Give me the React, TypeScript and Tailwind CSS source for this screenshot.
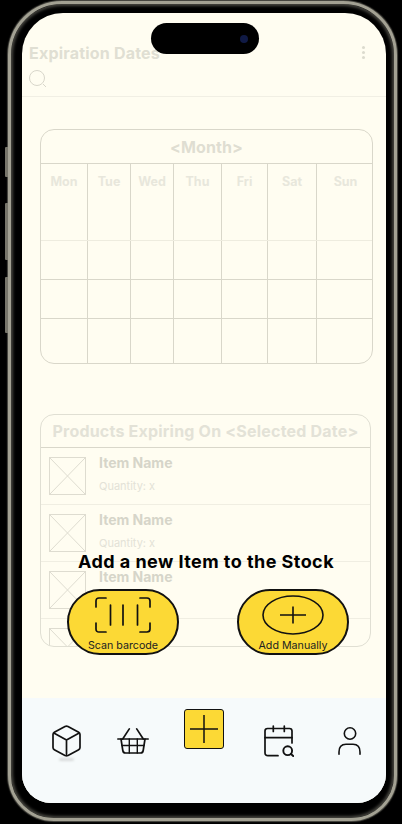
const font = "font-['Inter','Liberation_Sans',sans-serif]";

const cols = ["Mon", "Tue", "Wed", "Thu", "Fri", "Sat", "Sun"];

function CalendarCard() {
  const rows = ["h-[77px] border-[#eeecdf]", "h-[39px] border-[#d9d7ca]", "h-[39px] border-[#d9d7ca]", "h-[44px] border-[#d9d7ca]"];
  return (
    <div className="mx-[18px] mt-[32px] h-[235px] w-[333px] overflow-hidden rounded-[14px] border border-[#d9d7ca]">
      <div className="flex h-[34px] items-center justify-center border-b border-[#d9d7ca] text-[16px] font-bold tracking-[0.1px] text-[#dfded2]">&lt;Month&gt;</div>
      <div className="flex flex-col">
        {rows.map((r, i) => (
          <div key={i} className={`grid grid-cols-[47px_43px_43px_48px_46px_49px_57px] ${r} ${i < 3 ? "border-b" : ""}`}>
            {cols.map((c) => (
              <div key={c} className="border-r border-[#d9d7ca] pt-[9px] text-center text-[12.5px] font-bold text-[#e8e7dc] last:border-r-0">
                {i === 0 ? c : ""}
              </div>
            ))}
          </div>
        ))}
      </div>
    </div>
  );
}

function Thumb() {
  return (
    <svg width="37" height="38" viewBox="0 0 37 38" className="shrink-0" fill="none" stroke="#dedcd0" strokeWidth="1">
      <rect x="0.5" y="0.5" width="36" height="37" />
      <path d="M0.5 0.5 36.5 37.5M36.5 0.5 0.5 37.5" />
    </svg>
  );
}

function ProductRow({ empty }: { empty?: boolean }) {
  return (
    <div className="flex h-[57px] shrink-0 gap-[13px] border-b border-[#f0eee2] pl-[8px] pt-[9px]">
      <Thumb />
      {!empty && (
        <div className="-mt-[1px] flex flex-col">
          <div className="text-[14px] leading-[14px] font-bold text-[#d6d5c9]">Item Name</div>
          <div className="mt-[9px] text-[11px] leading-[14px] text-[#e3e2d7]">Quantity: x</div>
        </div>
      )}
    </div>
  );
}

function ProductsCard() {
  return (
    <div className="mx-[18px] mt-[50px] flex h-[233px] w-[331px] flex-col overflow-hidden rounded-[14px] border border-[#e0dfd3]">
      <div className="flex h-[33px] shrink-0 items-center justify-center border-b border-[#d9d7ca] text-[16px] font-bold tracking-[0.2px] whitespace-nowrap text-[#e3e2d7]">
        Products Expiring On &lt;Selected Date&gt;
      </div>
      <ProductRow />
      <ProductRow />
      <ProductRow />
      <ProductRow empty />
    </div>
  );
}

function ScanIcon() {
  return (
    <svg width="56" height="36" viewBox="0 0 56 36" fill="none" stroke="#111" strokeWidth="1.7" strokeLinecap="round">
      <path d="M11 1H4Q1 1 1 4V10M45 1H52Q55 1 55 4V10M11 35H4Q1 35 1 32V26M45 35H52Q55 35 55 32V26" />
      <path d="M15.5 8V28M28 8V28M42.5 8V28" />
    </svg>
  );
}

function AddIcon() {
  return (
    <svg width="62" height="40" viewBox="0 0 62 40" fill="none" stroke="#111" strokeWidth="1.6">
      <ellipse cx="31" cy="20" rx="30" ry="19" />
      <path d="M18 20H44M31 11.5V28.5" />
    </svg>
  );
}

function Action({ label, icon }: { label: string; icon: React.ReactNode }) {
  return (
    <div className="flex h-[66px] w-[112px] flex-col items-center rounded-[33px] border-2 border-[#111] bg-[#fcd935] pt-[4px]">
      <div className="flex h-[40px] items-center">{icon}</div>
      <div className="mt-[5px] text-[10.7px] leading-[12px] whitespace-nowrap text-[#222]">{label}</div>
    </div>
  );
}

function Nav() {
  return (
    <div className="flex h-[105px] shrink-0 items-start bg-[#f6fafb] pl-[30px]">
      <div className="relative mt-[27px]">
        <svg width="29" height="32" viewBox="0 0 29 32" fill="none" stroke="#111" strokeWidth="1.7" strokeLinejoin="round" className="block">
          <path d="M13 1.5Q14.5 0.8 16 1.5L26.7 7.3Q28 8 28 9.5V22.5Q28 24 26.7 24.7L16 30.5Q14.5 31.2 13 30.5L2.3 24.7Q1 24 1 22.5V9.5Q1 8 2.3 7.3Z" />
          <path d="M1.8 8 14.5 15 27.2 8M14.5 15V31" />
        </svg>
        <div className="absolute top-[33px] left-[7px] h-[3px] w-[15px] rounded-full bg-[#d9dcdc] blur-[1px]" />
      </div>
      <svg width="32" height="26" viewBox="0 0 32 26" fill="none" stroke="#111" strokeWidth="1.7" strokeLinecap="round" strokeLinejoin="round" className="ml-[36px] mt-[30px]">
        <path d="M0.8 11H31.2" />
        <path d="M4 11 5.8 22.5Q6.2 25 8.5 25H23.5Q25.8 25 26.2 22.5L28 11" />
        <path d="M5 17.5H27M12.3 11V25M20.3 11V25" strokeWidth="1.4" />
        <path d="M5.7 11 12.3 0.9M26.3 11 19.7 0.9" />
      </svg>
      <div className="relative ml-[35px] mt-[11px] h-[40px] w-[40px] rounded-[3px] border border-[#111] bg-[#fcd935]">
        <svg width="38" height="38" viewBox="0 0 38 38" fill="none" stroke="#111" strokeWidth="1.5" className="block">
          <path d="M5 19H33M19 5V33" />
        </svg>
      </div>
      <svg width="30" height="32" viewBox="0 0 30 32" fill="none" stroke="#111" strokeWidth="1.7" strokeLinecap="round" strokeLinejoin="round" className="ml-[40px] mt-[27px]">
        <path d="M14 30.7H4Q1 30.7 1 27.7V6Q1 3.5 3.5 3.5H25.5Q28 3.5 28 6V18" />
        <path d="M1 12.7H28" />
        <path d="M9.3 1V6.5M20.3 1V6.5" />
        <circle cx="23.7" cy="25.7" r="4.4" strokeWidth="1.9" />
        <path d="M27 29 29.2 31" strokeWidth="1.9" />
      </svg>
      <svg width="23" height="29" viewBox="0 0 23 29" fill="none" stroke="#111" strokeWidth="1.6" strokeLinecap="round" className="ml-[44px] mt-[29px]">
        <circle cx="12" cy="6.5" r="5.7" />
        <path d="M1 27.3V25Q1 17.3 8 17.3H15Q22 17.3 22 25V27.3" />
      </svg>
    </div>
  );
}

function Screen() {
  return (
    <div className={`relative flex h-[790px] w-[364px] flex-col overflow-hidden rounded-t-[41px] rounded-b-[29px] bg-[#fffdf1] ${font}`}>
      <div className="relative h-[84px] shrink-0 border-b border-[#f1efe4]">
        <div className="pl-[7px] pt-[31px] text-[16px] leading-[18px] font-bold tracking-[0.2px] text-[#e0dfd3]">Expiration Dates</div>
        <svg width="20" height="20" viewBox="0 0 20 20" fill="none" stroke="#d8d6ca" strokeWidth="1" className="ml-[7px] mt-[8px]">
          <circle cx="8" cy="8" r="7.5" />
          <path d="M14 14 17 17" />
        </svg>
        <div className="absolute top-[33px] right-[21px] flex flex-col gap-[2px]">
          <div className="h-[3px] w-[3px] rounded-full bg-[#dcdbce]" />
          <div className="h-[3px] w-[3px] rounded-full bg-[#dcdbce]" />
          <div className="h-[3px] w-[3px] rounded-full bg-[#dcdbce]" />
        </div>
      </div>
      <CalendarCard />
      <ProductsCard />
      <div className="flex-1" />
      <Nav />
      <div className="absolute top-[539px] left-0 flex w-full flex-col">
        <div className="pl-[56px] text-[18px] leading-[20px] font-bold tracking-[0.45px] whitespace-nowrap text-black">Add a new Item to the Stock</div>
        <div className="mt-[17px] flex gap-[58px] pl-[45px]">
          <Action label="Scan barcode" icon={<ScanIcon />} />
          <Action label="Add Manually" icon={<AddIcon />} />
        </div>
      </div>
      <div className="absolute top-[10px] left-[129px] flex h-[31px] w-[108px] items-center justify-end rounded-full bg-black pr-[11px]">
        <div className="h-[8px] w-[8px] rounded-full bg-[#101a45]" />
      </div>
    </div>
  );
}

export default function App() {
  return (
    <div className="relative h-[824px] w-[402px] overflow-hidden bg-black pl-[8px] pt-[1px]">
      <div className="absolute top-[147px] left-[5px] h-[30px] w-[3px] rounded-l-[1px] bg-[#77756a]" />
      <div className="absolute top-[203px] left-[5px] h-[57px] w-[3px] rounded-l-[1px] bg-[#77756a]" />
      <div className="absolute top-[277px] left-[5px] h-[56px] w-[3px] rounded-l-[1px] bg-[#77756a]" />
      <div className="h-[820px] w-[389px] rounded-t-[54px] rounded-b-[46px] border-[3px] border-[#a3a193] bg-black pl-[11px] pt-[9px] shadow-[inset_0_0_3px_2px_#46453f,0_0_1px_1px_#4e4d46]">
        <Screen />
      </div>
    </div>
  );
}
